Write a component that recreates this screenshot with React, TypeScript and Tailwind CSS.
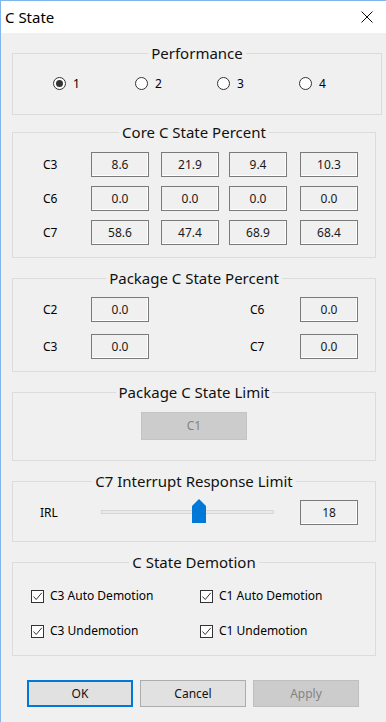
import type { ReactNode } from "react"

const font = { fontFamily: '"Noto Sans", "Open Sans", sans-serif' }

const core = [
  { name: "C3", values: ["8.6", "21.9", "9.4", "10.3"] },
  { name: "C6", values: ["0.0", "0.0", "0.0", "0.0"] },
  { name: "C7", values: ["58.6", "47.4", "68.9", "68.4"] },
]

// gaps between the four core boxes are not even in the original
const boxGaps = ["ml-0", "ml-[12px]", "ml-[10px]", "ml-[13px]"]

function Group({
  title,
  className,
  children,
}: {
  title: string
  className: string
  children: ReactNode
}) {
  return (
    <fieldset className={`ml-[11px] mr-[10px] border border-[#dcdcdc] ${className}`}>
      <legend className="mx-auto px-[3px] text-[15px] leading-[20px] text-[#111]">
        {title}
      </legend>
      {children}
    </fieldset>
  )
}

function ValueBox({ value, className = "" }: { value: string; className?: string }) {
  return (
    <div
      className={`flex h-[25px] w-[58px] shrink-0 items-center justify-center border border-[#7a7a7a] bg-[#f0f0f0] text-[12px] text-[#1a1a1a] shadow-[inset_-1px_-1px_0_#fff] ${className}`}
    >
      {value}
    </div>
  )
}

function Radio({ label, checked = false }: { label: string; checked?: boolean }) {
  return (
    <div className="flex w-[82px] items-center">
      <span className="flex h-[13px] w-[13px] items-center justify-center rounded-full border border-[#333] bg-white">
        {checked && <span className="h-[7px] w-[7px] rounded-full bg-[#333]" />}
      </span>
      <span className="ml-[7px] text-[12px] leading-[13px]">{label}</span>
    </div>
  )
}

function Check({ label }: { label: string }) {
  return (
    <div className="flex w-[169px] items-center">
      <span className="flex h-[13px] w-[13px] items-center justify-center border border-[#333] bg-white">
        <svg width="11" height="11" viewBox="0 0 11 11">
          <path d="M1.5 5.5 L4.2 8.5 L9.8 1.8" fill="none" stroke="#333" strokeWidth="1" />
        </svg>
      </span>
      <span className="ml-[6px] text-[12px] leading-[18px]">{label}</span>
    </div>
  )
}

function Button({
  children,
  variant = "normal",
}: {
  children: ReactNode
  variant?: "default" | "normal" | "disabled"
}) {
  const look =
    variant === "default"
      ? "border-2 border-[#0078d7] bg-[#e1e1e1] text-[#111]"
      : variant === "disabled"
        ? "border border-[#bfbfbf] bg-[#cccccc] text-[#838383]"
        : "border border-[#adadad] bg-[#e1e1e1] text-[#111]"
  return (
    <button
      type="button"
      className={`flex h-[27px] w-[106px] items-center justify-center text-[12px] ${look}`}
    >
      {children}
    </button>
  )
}

export default function App() {
  return (
    <div
      className="h-[722px] w-[386px] overflow-hidden border-l border-t border-[#7fb6ec] bg-[#f0f0f0] text-black"
      style={font}
    >
      {/* Title bar */}
      <div className="flex h-[32px] items-center justify-between bg-white pl-[4px] pr-[13px]">
        <span className="text-[15px]">C State</span>
        <svg width="12" height="12" viewBox="0 0 12 12">
          <path d="M0.5 0.5 L11.5 11.5 M11.5 0.5 L0.5 11.5" stroke="#111" strokeWidth="1" />
        </svg>
      </div>

      <Group title="Performance" className="mt-[10px] pb-[24px]">
        <div className="flex pl-[40px] pt-[14px]">
          <Radio label="1" checked />
          <Radio label="2" />
          <Radio label="3" />
          <Radio label="4" />
        </div>
      </Group>

      <Group title="Core C State Percent" className="mt-[7px] pb-[12px]">
        <div className="flex flex-col gap-[9px] pt-[10px]">
          {core.map((row) => (
            <div key={row.name} className="flex items-center pl-[30px]">
              <span className="w-[48px] text-[12px]">{row.name}</span>
              {row.values.map((v, i) => (
                <ValueBox key={i} value={v} className={boxGaps[i]} />
              ))}
            </div>
          ))}
        </div>
      </Group>

      <Group title="Package C State Percent" className="mt-[10px] pb-[12px]">
        <div className="flex flex-col gap-[12px] pt-[9px]">
          {[
            ["C2", "C6"],
            ["C3", "C7"],
          ].map(([a, b]) => (
            <div key={a} className="flex items-center pl-[30px]">
              <span className="w-[48px] text-[12px]">{a}</span>
              <ValueBox value="0.0" />
              <span className="ml-[101px] w-[50px] text-[12px]">{b}</span>
              <ValueBox value="0.0" />
            </div>
          ))}
        </div>
      </Group>

      <Group title="Package C State Limit" className="mt-[10px] pb-[20px]">
        <div className="flex justify-center pt-[10px]">
          <div className="flex h-[28px] w-[106px] items-center justify-center border border-[#c4c4c4] bg-[#cccccc] text-[12px] text-[#838383]">
            C1
          </div>
        </div>
      </Group>

      <Group title="C7 Interrupt Response Limit" className="mt-[10px] pb-[16px]">
        <div className="flex items-center pl-[27px] pt-[9px]">
          <span className="w-[61px] text-[12px]">IRL</span>
          <div className="relative h-[25px] w-[173px]">
            <div className="absolute left-0 right-0 top-[10px] h-[4px] border border-[#d6d6d6] bg-[#e7eaea]" />
            <svg
              className="absolute left-[91px] top-[-1px]"
              width="14"
              height="24"
              viewBox="0 0 14 24"
            >
              <path d="M0 7 L7 0 L14 7 L14 24 L0 24 Z" fill="#0078d7" />
            </svg>
          </div>
          <ValueBox value="18" className="ml-[26px]" />
        </div>
      </Group>

      <Group title="C State Demotion" className="mt-[10px] pb-[15px]">
        <div className="flex flex-col gap-[17px] pl-[18px] pt-[15px]">
          <div className="flex">
            <Check label="C3 Auto Demotion" />
            <Check label="C1 Auto Demotion" />
          </div>
          <div className="flex">
            <Check label="C3 Undemotion" />
            <Check label="C1 Undemotion" />
          </div>
        </div>
      </Group>

      <div className="mt-[24px] flex gap-[7px] pl-[26px]">
        <Button variant="default">OK</Button>
        <Button>Cancel</Button>
        <Button variant="disabled">Apply</Button>
      </div>
    </div>
  )
}
